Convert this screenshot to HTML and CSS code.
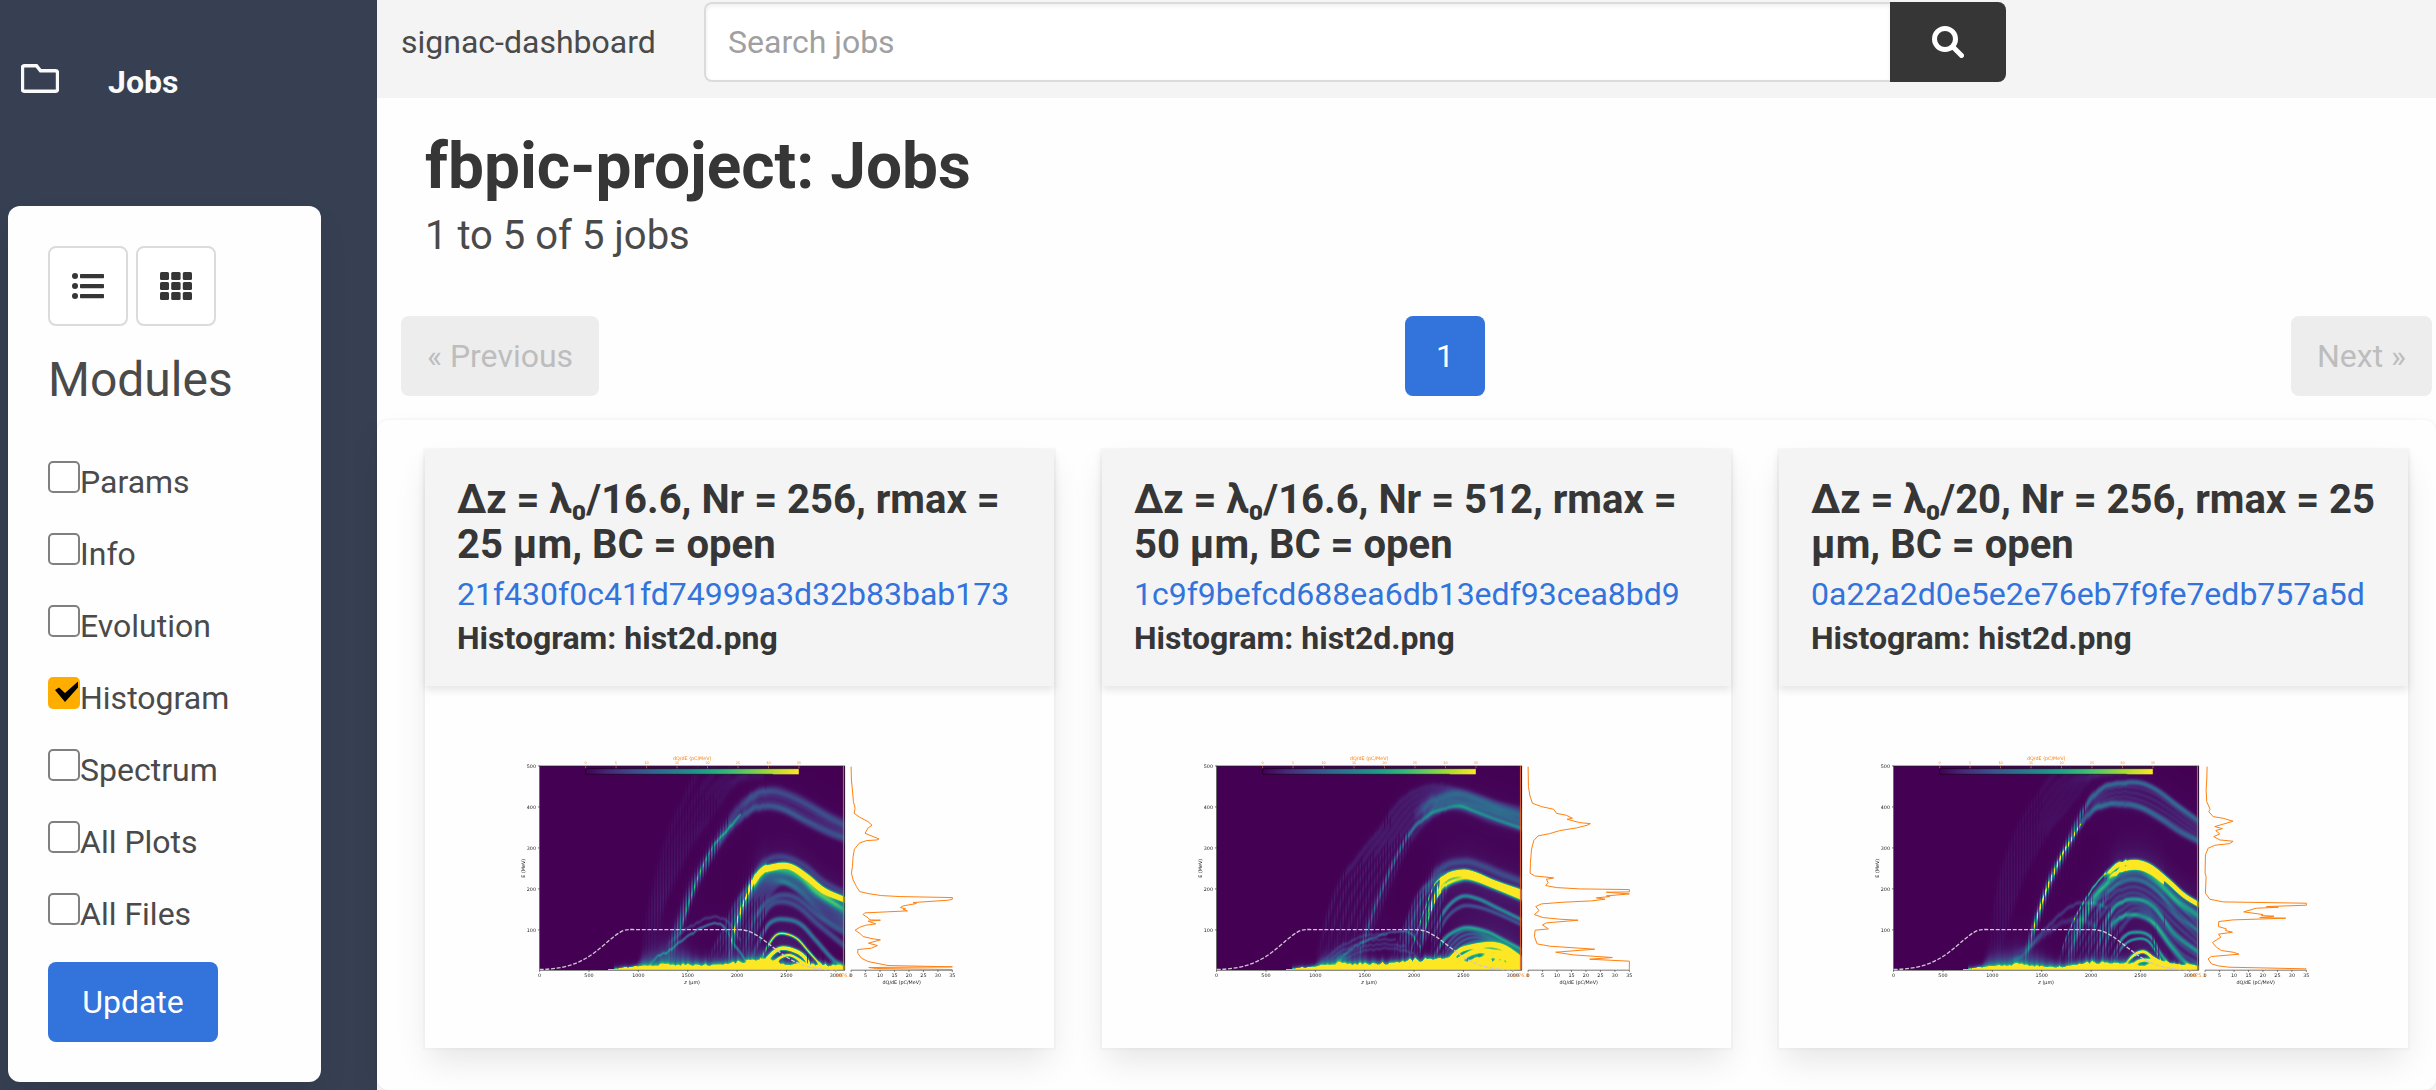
FILE: index.html
```html
<!DOCTYPE html>
<html lang="en">
<head>
<meta charset="utf-8">
<title>fbpic-project: Jobs</title>
<link rel="stylesheet" href="styles.css">
</head>
<body>
<div class="app">
  <aside class="sidebar">
    <a class="nav-item">
      <svg class="folder" viewBox="0 0 38 29"><path d="M3.5 1.700h12l4 5h15q2 0 2 2v16.600q0 2-2 2h-31q-2 0-2-2v-21.600q0-2 2-2z" fill="none" stroke="#fafafa" stroke-width="3.400"/></svg>
      <span>Jobs</span>
    </a>
    <form class="panel">
      <div class="views">
        <button type="button" class="view" aria-label="List view"><svg viewBox="0 0 32 28"><g fill="#363636"><circle cx="3" cy="4" r="3"/><circle cx="3" cy="14" r="3"/><circle cx="3" cy="24" r="3"/><rect x="8" y="2" width="24" height="4.3" rx=".8"/><rect x="8" y="12" width="24" height="4.3" rx=".8"/><rect x="8" y="22" width="24" height="4.3" rx=".8"/></g></svg></button>
        <button type="button" class="view" aria-label="Grid view"><svg viewBox="0 0 32 28"><g fill="#363636"><rect width="9" height="8" rx="1.5"/><rect x="11.2" width="9.4" height="8" rx="1.5"/><rect x="22.8" width="9.2" height="8" rx="1.5"/><rect y="10" width="9" height="8" rx="1.5"/><rect x="11.2" y="10" width="9.4" height="8" rx="1.5"/><rect x="22.8" y="10" width="9.2" height="8" rx="1.5"/><rect y="20" width="9" height="8" rx="1.5"/><rect x="11.2" y="20" width="9.4" height="8" rx="1.5"/><rect x="22.8" y="20" width="9.2" height="8" rx="1.5"/></g></svg></button>
      </div>
      <h2 class="panel-title">Modules</h2>
      <div class="modules">
        <label class="module"><span class="box"></span>Params</label>
        <label class="module"><span class="box"></span>Info</label>
        <label class="module"><span class="box"></span>Evolution</label>
        <label class="module"><span class="box checked"><svg viewBox="0 0 32 32"><path d="M7 13l4-2.5 6 5.5L30 4.500v6L17 25z"/></svg></span>Histogram</label>
        <label class="module"><span class="box"></span>Spectrum</label>
        <label class="module"><span class="box"></span>All Plots</label>
        <label class="module"><span class="box"></span>All Files</label>
      </div>
      <button type="button" class="update">Update</button>
    </form>
  </aside>
  <main class="main">
    <nav class="topbar">
      <span class="brand">signac-dashboard</span>
      <div class="search">
        <input class="search-input" type="text" placeholder="Search jobs">
        <button class="search-button" aria-label="Search"><svg viewBox="0 0 32 32"><circle cx="13" cy="13" r="10.500" fill="none" stroke="#fff" stroke-width="5"/><path d="M21 21l8.500 8.500" stroke="#fff" stroke-width="5" stroke-linecap="round"/></svg></button>
      </div>
    </nav>
    <header class="heading">
      <h1>fbpic-project: Jobs</h1>
      <p>1 to 5 of 5 jobs</p>
    </header>
    <div class="pagination">
      <span class="page-step">« Previous</span>
      <span class="page-current">1</span>
      <span class="page-step">Next »</span>
    </div>
    <section class="jobs">
      <article class="card">
        <header class="card-head"><h3>Δz = λ₀/16.6, Nr = 256, rmax = 25 µm, BC = open</h3><a>21f430f0c41fd74999a3d32b83bab173</a><strong>Histogram: hist2d.png</strong></header>
        <div class="card-body"><figure class="plot" data-plot="0"></figure></div>
      </article>
      <article class="card">
        <header class="card-head"><h3>Δz = λ₀/16.6, Nr = 512, rmax = 50 µm, BC = open</h3><a>1c9f9befcd688ea6db13edf93cea8bd9</a><strong>Histogram: hist2d.png</strong></header>
        <div class="card-body"><figure class="plot" data-plot="1"></figure></div>
      </article>
      <article class="card">
        <header class="card-head"><h3>Δz = λ₀/20, Nr = 256, rmax = 25 µm, BC = open</h3><a>0a22a2d0e5e2e76eb7f9fe7edb757a5d</a><strong>Histogram: hist2d.png</strong></header>
        <div class="card-body"><figure class="plot" data-plot="2"></figure></div>
      </article>
    </section>
  </main>
</div>
<script src="plots.js"></script>
</body>
</html>
```
FILE: styles.css
```css
* { box-sizing: border-box; }
body {
  margin: 0;
  font: 32px/48px Roboto, sans-serif;
  color: #4a4a4a;
  background: #fefefe;
}
h1, h2, h3, p, figure { margin: 0; }
button, input { font: inherit; }
.app { display: flex; height: 1090px; overflow: hidden; }

.sidebar { width: 377px; flex: none; background: #364052; padding: 0 8px; }
.nav-item {
  display: flex;
  height: 206px;
  padding: 58px 0 0 13px;
  gap: 49px;
  color: #fafafa;
  font-weight: 700;
}
.folder { width: 38px; height: 29px; margin-top: 6px; }
.panel {
  width: 313px;
  height: 876px;
  padding: 40px;
  border-radius: 12px;
  background: #fefefe;
  box-shadow: 0 16px 32px -4px rgba(10, 10, 10, .1);
}
.views { display: flex; gap: 8px; }
.view {
  width: 80px;
  height: 80px;
  padding: 0;
  display: grid;
  place-items: center;
  border: 2px solid #dbdbdb;
  border-radius: 8px;
  background: #fff;
}
.view svg { width: 32px; height: 28px; }
.panel-title { font-size: 48px; line-height: 54px; font-weight: 400; margin-top: 27px; }
.modules { padding-top: 51px; }
.module { display: flex; align-items: flex-start; height: 72px; line-height: 48px; }
.box {
  width: 32px;
  height: 32px;
  margin-top: 3px;
  border: 2px solid #808080;
  border-radius: 5px;
  background: #fff;
}
.checked { border: 0; background: #ffae00; }
.checked svg { display: block; width: 32px; height: 32px; }
.update {
  display: block;
  width: 170px;
  height: 80px;
  border: 0;
  border-radius: 8px;
  color: #fff;
  background: #3273dc;
}

.main { flex: 1; min-width: 0; display: flex; flex-direction: column; }
.topbar { display: flex; height: 98px; padding: 2px 24px; background: #f4f4f4; }
.brand { width: 303px; line-height: 80px; }
.search { display: flex; width: 1302px; height: 80px; }
.search-input {
  flex: 1;
  padding: 0 22px;
  border: 2px solid #dbdbdb;
  border-right: 0;
  border-radius: 8px 0 0 8px;
  background: #fff;
  box-shadow: inset 0 2px 4px rgba(10, 10, 10, .07);
}
.search-input::placeholder { color: #a0a0a0; opacity: 1; }
.search-button {
  width: 116px;
  padding: 0;
  display: grid;
  place-items: center;
  border: 0;
  border-radius: 0 8px 8px 0;
  background: #363636;
}
.search-button svg { width: 32px; height: 32px; }
.heading { height: 218px; padding: 33px 48px 0; }
.heading h1 { font-size: 64px; line-height: 72px; color: #363636; }
.heading p { font-size: 40px; line-height: 50px; margin-top: 8px; }
.pagination { display: flex; justify-content: space-between; height: 104px; padding: 0 4px 0 24px; }
.page-step, .page-current {
  height: 80px;
  line-height: 80px;
  border-radius: 8px;
  text-align: center;
}
.page-step { width: 198px; color: #bdbdbd; background: #ededed; }
.page-step:last-child { width: 141px; }
.page-current { width: 80px; color: #fff; background: #3273dc; }

.jobs {
  flex: 1;
  display: grid;
  grid-template-columns: repeat(3, 1fr);
  gap: 48px;
  align-items: start;
  padding: 30px 28px 0 48px;
  border-radius: 12px;
  background: #fefefe;
  box-shadow: 0 16px 32px -4px rgba(10, 10, 10, .1), 0 0 0 2px rgba(10, 10, 10, .02);
}
.card {
  height: 598px;
  background: #fefefe;
  box-shadow: 0 16px 32px -4px rgba(10, 10, 10, .1), 0 0 0 2px rgba(10, 10, 10, .02);
}
.card-head {
  display: flex;
  flex-direction: column;
  height: 236px;
  padding: 27px 32px;
  background: #f4f4f4;
  box-shadow: 0 4px 8px rgba(10, 10, 10, .1);
}
.card-head h3 { font-size: 40px; line-height: 45px; color: #363636; }
.card-head a { color: #3273dc; line-height: 46px; margin-top: 4px; }
.card-head strong { color: #363636; line-height: 44px; margin-top: -1px; }
.card-body { padding: 48px; }

/* The heatmap canvas and the axes drawing share one grid cell. */
.plot { display: grid; aspect-ratio: 2; }
.plot canvas, .plot svg { grid-area: 1 / 1; }
.plot canvas { width: 57.25%; height: 76.625%; margin: 6% 0 0 12.5%; }
.plot svg { width: 100%; height: 100%; font-family: "DejaVu Sans", sans-serif; font-size: 14.500px; }
```
FILE: plots.js
```js
// Figure space is 1600 x 800; the heatmap covers (200,96)-(1116,709).
const L = 200, T = 96, W = 916, H = 613;
const viridis = [[68,1,84],[72,40,120],[62,74,137],[49,104,142],[38,130,142],[31,158,137],[53,183,121],[109,205,89],[180,222,44],[253,231,37]];

function colour(v) {
  const p = Math.max(0, Math.min(1, v)) * 9, i = Math.min(8, Math.floor(p)), f = p - i;
  return viridis[i].map((c, k) => c + (viridis[i + 1][k] - c) * f);
}

// Repeatable noise in 0..1, smooth between whole numbers.
function noise(x) {
  const hash = n => { const s = Math.sin(n * 127.1 + 11.7) * 43758.5453; return s - Math.floor(s); };
  const i = Math.floor(x), f = x - i;
  return hash(i) * (1 - f) + hash(i + 1) * f;
}

// Cubic Hermite interpolation with finite-difference tangents; null outside the range.
function curve(pts, x) {
  const n = pts.length;
  if (x < pts[0][0] || x > pts[n - 1][0]) return null;
  let i = 0;
  while (i < n - 2 && x > pts[i + 1][0]) i++;
  const slope = k => {
    const a = pts[Math.max(0, k - 1)], b = pts[Math.min(n - 1, k + 1)];
    return (b[1] - a[1]) / (b[0] - a[0]);
  };
  const [x0, y0] = pts[i], [x1, y1] = pts[i + 1], h = x1 - x0, t = (x - x0) / h;
  const t2 = t * t, t3 = t2 * t;
  return (2*t3 - 3*t2 + 1) * y0 + (t3 - 2*t2 + t) * h * slope(i) + (3*t2 - 2*t3) * y1 + (t3 - t2) * h * slope(i + 1);
}

// Each ridge: [amplitude, width, points].  Each band: [amplitude, width, count, upper points, lower points].
const plots = [
  { dx: 81, last: "3076.8",
    ridges: [
      [.16, 13, [[490,660],[530,560],[575,440],[620,355],[670,270],[720,200],[770,160],[820,150],[870,165],[920,190],[980,225],[1036,252]]],
      [.20, 11, [[500,660],[540,550],[580,445],[620,365],[670,285],[720,232],[760,206],[800,198],[850,208],[920,245],[980,275],[1036,297]]],
      [.3, 4, [[520,640],[545,550],[580,445],[610,370],[640,315],[670,280],[700,245],[720,225]]],
      [1.9, 8, [[740,450],[765,410],[790,388],[815,380],[850,375],[880,383],[920,410],[970,450],[1036,480]]],
      [.5, 12, [[680,660],[705,560],[730,490],[765,425],[800,393],[850,390],[900,410],[950,457],[1036,508]]],
      [.7, 3, [[685,650],[700,575],[720,510],[745,450],[775,405],[800,385]]],
      [.15, 10, [[670,640],[700,530],[750,420],[800,360],[850,350],[910,375],[970,425],[1036,460]]],
      [.2, 9, [[720,650],[755,550],[795,490],[840,465],[890,475],[950,525],[1000,560],[1036,580]]],
      [.2, 9, [[735,650],[770,560],[805,500],[840,484],[890,498],[950,550],[1036,620]]],
      [.36, 7, [[750,660],[780,590],[810,547],[850,537],[900,552],[950,605],[1000,660],[1036,680]]],
      [.9, 4, [[775,665],[800,620],[825,586],[850,580],[890,596],[925,635],[965,680]]],
      [1.6, 6, [[780,680],[815,640],[845,624],[890,635],[915,655],[935,690]]],
      [1.1, 5, [[800,690],[835,655],[865,645],[890,655],[930,685]]],
      [.3, 4, [[440,680],[470,650],[500,635],[560,590],[630,552],[670,560],[705,620],[740,665]]],
      [.12, 5, [[500,610],[560,565],[630,532],[680,545],[720,600]]]
    ],
    bands: [
      [.03, 12, 5, [[420,660],[445,520],[500,310],[560,160],[595,85]], [[450,660],[480,520],[560,330],[620,240],[700,130],[790,105]]],
      [.12, 8, 6, [[620,660],[660,590],[700,500],[760,430],[840,400],[920,430],[980,470],[1036,520]], [[720,660],[770,520],[840,430],[900,460],[970,530],[1036,570]]],
      [.07, 8, 4, [[720,200],[760,160],[820,155],[900,185],[1036,260]], [[720,235],[760,200],[820,195],[900,230],[1036,290]]]
    ],
    glow: [[119,0],[400,0],[430,40],[510,65],[600,30],[780,35],[850,20],[1036,10]],
    floor: [[119,1],[290,1],[350,6],[400,12],[450,16],[550,17],[670,19],[740,28],[800,30],[840,20],[900,18],[950,17],[1036,12]],
    side: "1054,80 1055,120 1058,150 1061,185 1066,205 1063,220 1080,232 1105,245 1117,256 1105,264 1096,280 1120,290 1138,297 1132,300 1100,302 1078,310 1064,328 1060,350 1058,380 1055,400 1060,420 1070,440 1080,455 1105,461 1145,467 1200,470 1358,473 1358,478 1345,481 1240,488 1250,491 1210,498 1202,503 1218,507 1210,509 1223,513 1160,516 1095,519 1090,524 1105,534 1110,540 1142,541 1105,544 1128,552 1098,556 1080,562 1066,571 1080,580 1090,590 1120,597 1142,600 1106,610 1133,617 1115,625 1074,629 1074,640 1085,655 1105,665 1165,677 1358,681 1107,683 1130,686 1358,689" },
  { dx: 90, last: "3076.8",
    ridges: [
      [.3, 6, [[530,660],[570,540],[610,435],[650,345],[690,275],[750,220],[800,202],[840,198],[880,212],[940,235],[1026,265]]],
      [.2, 14, [[700,225],[760,180],[830,160],[890,175],[950,200],[1026,225]]],
      [.18, 14, [[720,235],[790,190],[850,190],[920,210],[1026,250]]],
      [1.8, 8, [[765,455],[790,415],[845,396],[880,402],[940,428],[1026,457]]],
      [.75, 8, [[720,600],[745,510],[780,445],[845,415],[880,418],[940,440],[1026,474]]],
      [.55, 3, [[685,650],[710,570],[735,500],[765,430],[800,400]]],
      [.5, 3, [[715,645],[735,560],[760,490],[785,450]]],
      [.18, 12, [[660,660],[690,560],[730,460],[780,385],[850,364],[900,375],[960,400],[1026,425]]],
      [.42, 6, [[750,600],[790,515],[840,470],[890,475],[950,503],[1026,540]]],
      [.2, 6, [[750,640],[790,545],[840,500],[890,500],[950,520],[1026,555]]],
      [.5, 6, [[750,670],[790,600],[820,575],[860,562],[920,575],[970,600],[1026,630]]],
      [1.5, 7, [[790,680],[820,645],[850,625],[920,613],[970,622],[1026,660]]],
      [1.2, 9, [[800,690],[850,650],[900,632],[970,645],[1026,680]]],
      [1.2, 10, [[860,690],[900,660],[940,645],[1000,660],[1026,690]]],
      [.2, 4, [[460,670],[530,615],[590,590],[650,575],[690,580],[720,620]]]
    ],
    bands: [
      [.065, 9, 7, [[405,660],[430,560],[480,430],[540,340],[590,280],[640,205],[700,155],[770,135],[850,155],[920,180],[1026,205]], [[540,660],[590,520],[640,400],[690,300],[740,240],[800,205],[850,210],[920,240],[1026,270]]],
      [.13, 7, 6, [[630,660],[670,570],[710,470],[780,405],[850,395],[1026,460]], [[700,660],[760,540],[800,440],[850,410],[920,430],[1026,480]]],
      [.2, 5, 6, [[770,670],[810,600],[860,570],[930,590],[1026,640]], [[810,680],[860,640],[930,620],[1026,670]]],
      [.1, 5, 4, [[420,670],[480,620],[540,590],[620,580]], [[450,680],[520,640],[620,625],[700,640]]]
    ],
    glow: [[110,0],[390,0],[430,35],[520,35],[600,18],[1026,14]],
    floor: [[110,1],[290,1],[350,7],[400,12],[440,19],[550,20],[640,24],[700,31],[800,32],[950,30],[1026,28]],
    side: "1045,80 1046,140 1050,165 1058,190 1085,200 1122,208 1130,220 1160,226 1178,235 1162,238 1200,248 1232,251 1222,256 1190,264 1140,272 1110,281 1075,288 1062,302 1055,330 1052,370 1051,400 1065,408 1122,414 1100,418 1105,428 1098,437 1130,443 1200,447 1349,449 1349,456 1280,457 1349,462 1280,468 1290,470 1250,474 1276,478 1235,483 1150,487 1085,492 1068,500 1078,512 1064,524 1090,533 1140,538 1195,541 1100,549 1088,555 1106,567 1066,571 1064,590 1072,612 1110,619 1245,628 1128,637 1180,645 1298,653 1230,658 1349,664 1349,690" },
  { dx: 99, last: "3075.1",
    ridges: [
      [.32, 8, [[490,660],[530,530],[570,415],[620,310],[660,225],[700,165],[740,135],[800,126],[845,129],[890,150],[950,195],[1018,245]]],
      [.28, 9, [[490,660],[530,535],[570,425],[620,325],[660,250],[700,208],[740,192],[780,190],[840,202],[900,235],[960,275],[1018,305]]],
      [.6, 4, [[510,590],[540,495],[570,420],[600,350],[630,300],[660,250]]],
      [1.9, 7, [[730,405],[760,382],[790,370],[830,366],[870,380],[920,420],[970,465],[1018,495]]],
      [1.1, 6, [[740,415],[780,390],[830,382],[870,395],[910,425]]],
      [.48, 12, [[620,660],[650,570],[690,490],[740,425],[790,388],[840,385],[890,420],[950,480],[1018,530]]],
      [.6, 3, [[600,640],[630,560],[660,500],[695,445],[735,400]]],
      [.2, 8, [[680,640],[720,500],[770,430],[830,415],[890,450],[950,525],[1018,575]]],
      [.38, 7, [[700,660],[730,560],[765,495],[830,478],[880,500],[940,580],[1018,640]]],
      [.42, 7, [[720,660],[750,560],[785,530],[830,525],[880,550],[930,615],[980,670],[1018,688]]],
      [.5, 5, [[750,660],[790,590],[830,576],[870,590],[900,640],[930,680]]],
      [.5, 4, [[760,665],[790,615],[830,596],[865,605],[905,665]]],
      [1.4, 5, [[790,675],[820,645],[850,635],[880,655],[920,680]]],
      [1.1, 6, [[800,690],[830,665],[860,660],[930,675],[1018,688]]],
      [.13, 6, [[440,670],[490,640],[560,560],[630,500],[680,488],[740,500]]],
      [.1, 9, [[470,640],[530,600],[600,550],[660,540],[710,560]]]
    ],
    bands: [
      [.03, 10, 6, [[380,660],[410,460],[460,300],[530,170],[590,90]], [[410,660],[470,450],[550,290],[620,200],[700,110],[800,100]]],
      [.08, 7, 4, [[680,195],[740,150],[800,140],[880,160],[1018,260]], [[680,220],[740,190],[800,185],[880,215],[1018,300]]],
      [.14, 7, 8, [[590,670],[630,590],[680,490],[760,420],[830,400],[900,440],[1018,560]], [[720,670],[760,600],[800,540],[850,520],[900,580],[960,660],[1018,690]]]
    ],
    glow: [[101,0],[350,0],[390,40],[500,50],[600,22],[850,25],[950,12],[1018,10]],
    floor: [[101,1],[280,1],[330,6],[390,13],[440,17],[490,17],[540,12],[600,11],[650,18],[700,24],[760,20],[850,16],[890,24],[940,15],[1018,12]],
    side: "1042,80 1041,120 1039,150 1041,185 1051,208 1047,215 1060,230 1090,235 1120,244 1065,260 1088,266 1068,272 1080,282 1062,290 1080,300 1120,304 1110,311 1065,316 1045,325 1037,345 1036,400 1039,410 1037,460 1050,478 1090,486 1340,490 1340,496 1220,500 1256,502 1190,505 1152,516 1210,524 1205,527 1243,529 1200,533 1278,535 1120,540 1077,545 1076,560 1100,567 1097,572 1118,577 1076,583 1083,592 1058,608 1070,622 1085,632 1120,637 1138,643 1055,650 1045,657 1055,672 1075,678 1107,682 1340,687" }
];

function heatmap(p, canvas) {
  const w = canvas.width = 305, h = canvas.height = 204;
  const ctx = canvas.getContext("2d"), img = ctx.createImageData(w, h);
  const lines = p.ridges.slice();
  for (const [amp, sig, n, a, b] of p.bands) {
    const x0 = a[0][0], x1 = a[a.length - 1][0], u0 = b[0][0], u1 = b[b.length - 1][0];
    for (let k = 0; k < n; k++) {
      const f = k / (n - 1), s = x0 + (u0 - x0) * f, e = x1 + (u1 - x1) * f, pts = [];
      for (let j = 0; j <= 10; j++) {
        const g = j / 10;
        pts.push([s + (e - s) * g, curve(a, x0 + (x1 - x0) * g) * (1 - f) + curve(b, u0 + (u1 - u0) * g) * f]);
      }
      lines.push([amp, sig, pts]);
    }
  }
  for (let i = 0; i < w; i++) {
    const x = i / w * W + L - p.dx;
    const active = [];
    for (const [amp, sig, pts] of lines) {
      const y = curve(pts, x);
      if (y === null) continue;
      const y2 = curve(pts, x + 2) ?? y, m = Math.min(5, Math.abs(y2 - y) / 2);
      const dots = m > 1.5 ? .65 + .55 * Math.cos(i * 2.2) : 1;
      const edge = Math.min(1, (x - pts[0][0]) / 40 + .15);
      const wobble = x < 800 ? 6 * (noise(i / 3 + amp * 50) - .5) : 0;
      active.push([amp * dots * edge, sig * Math.sqrt(1 + m * m * .7), y + wobble]);
    }
    const fl = curve(p.floor, x) ?? 10, gl = Math.max(3, curve(p.glow, x) ?? 5);
    const jag = fl > 6 ? (noise(i / 2.5) - .5) * fl * .5 : 0;
    for (let j = 0; j < h; j++) {
      const y = j / h * H + 78;
      let v = 0;
      for (const [a, s, c] of active) {
        const d = (y - c) / s;
        if (d * d < 9) v += a * Math.exp(-d * d);
        v += a * .03 * Math.exp(-Math.abs(y - c) / 45);
      }
      const above = 691 - fl - jag - y;
      v += above < 0 ? 1.2 : fl > 5 ? .5 * Math.exp(-above / (gl * .45)) + .35 * Math.exp(-above / 5) : 0;
      const c = colour(v), o = (j * w + i) * 4;
      img.data[o] = c[0]; img.data[o + 1] = c[1]; img.data[o + 2] = c[2]; img.data[o + 3] = 255;
    }
  }
  ctx.putImageData(img, 0, 0);
}

function axes(p, id) {
  const orange = "#ff7f0e";
  const text = (x, y, s, extra = "") => `<text x="${x}" y="${y}" text-anchor="middle" ${extra}>${s}</text>`;
  let s = `<defs><linearGradient id="bar${id}">` + viridis.map((c, i) => `<stop offset="${i / 9}" stop-color="rgb(${c})"/>`).join("") + "</linearGradient></defs>";
  s += `<rect x="${L}" y="${T}" width="${W}" height="${H}" fill="none" stroke="#222" stroke-width="2"/>`;
  s += `<rect x="338" y="104" width="640" height="17" fill="url(#bar${id})"/><path d="M338 121V104H978M338 121H900" fill="none" stroke="#15051c" stroke-width="2"/>`;
  for (let i = 0; i < 8; i++) {
    const x = 338 + i * 91.5;
    s += `<path d="M${x} 97v6" stroke="${orange}" stroke-width="2"/>` + text(x, 91, i * 5, `fill="${orange}" font-size="10"`);
  }
  s += text(658, 78, "dQ/dE (pC/MeV)", `fill="${orange}"`);
  for (let i = 1; i <= 5; i++) {
    const y = 711 - i * 123;
    s += `<path d="M195 ${y}h5" stroke="#333" stroke-width="2"/><text x="189" y="${y + 5}" text-anchor="end">${i * 100}</text>`;
  }
  for (let i = 0; i <= 6; i++) {
    const x = 200 + i * 148.2;
    s += `<path d="M${x} 709v5" stroke="#333" stroke-width="2"/>` + text(x, 731, i * 500);
  }
  s += text(1112, 731, p.last, `fill="${orange}"`);
  s += text(658, 752, "<tspan font-style='italic'>z</tspan> (µm)");
  s += text(0, 0, "E (MeV)", 'transform="translate(156 403) rotate(-90)"');
  s += `<path d="M1112 96V709" stroke="#e0662b" stroke-width="3"/>`;
  s += `<path transform="translate(81 18)" d="M119 689C200 687 250 670 310 617S375 569 405 569H715C760 569 790 600 830 630S910 690 1012 690" fill="none" stroke="#cfc6d2" stroke-width="4" stroke-dasharray="12 5"/>`;
  s += `<path d="M1135 709H1439" stroke="#333" stroke-width="2"/>`;
  for (let i = 0; i < 8; i++) {
    const x = 1135 + i * 43.43;
    s += `<path d="M${x} 709v5" stroke="#333" stroke-width="2"/>` + text(x, 731, i * 5);
  }
  s += text(1287, 750, "dQ/dE (pC/MeV)");
  s += `<polyline transform="translate(${p.dx} 18)" points="${p.side}" fill="none" stroke="${orange}" stroke-width="3" stroke-linejoin="round"/>`;
  return `<svg viewBox="0 0 1600 800" fill="#222">${s}</svg>`;
}

document.querySelectorAll(".plot").forEach(el => {
  const id = +el.dataset.plot, canvas = document.createElement("canvas");
  heatmap(plots[id], canvas);
  el.innerHTML = axes(plots[id], id);
  el.prepend(canvas);
});
```
